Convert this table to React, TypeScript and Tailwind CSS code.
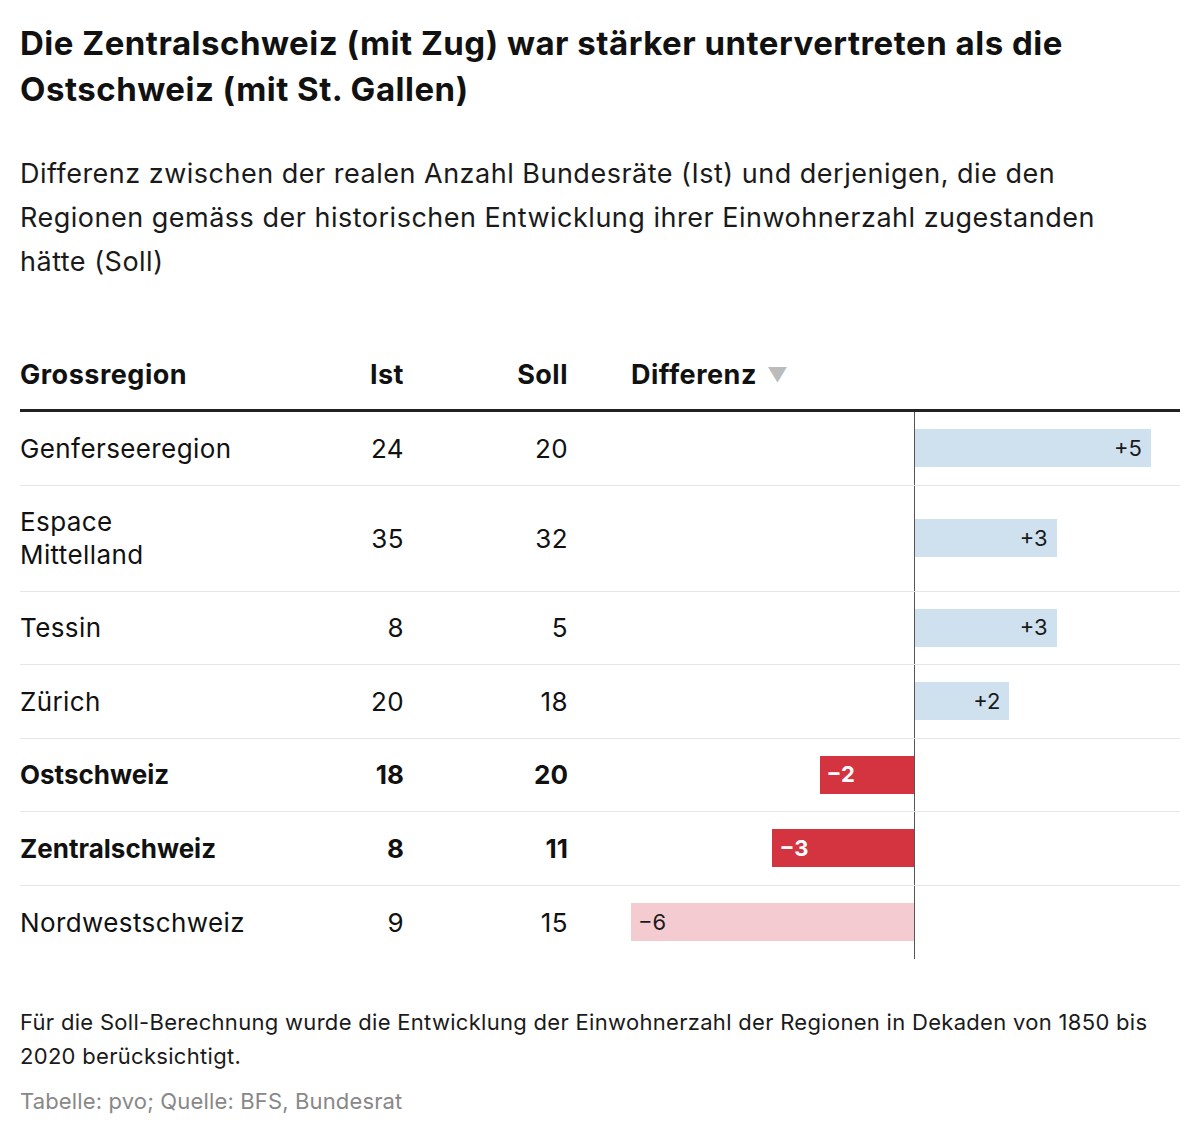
import React from "react";

type Row = {
  name: React.ReactNode;
  ist: number;
  soll: number;
  diff: number;
  bold?: boolean;
  tall?: boolean;
};

const rows: Row[] = [
  { name: "Genferseeregion", ist: 24, soll: 20, diff: 5 },
  {
    name: (
      <>
        Espace
        <br />
        Mittelland
      </>
    ),
    ist: 35,
    soll: 32,
    diff: 3,
    tall: true,
  },
  { name: "Tessin", ist: 8, soll: 5, diff: 3 },
  { name: "Zürich", ist: 20, soll: 18, diff: 2 },
  { name: "Ostschweiz", ist: 18, soll: 20, diff: -2, bold: true },
  { name: "Zentralschweiz", ist: 8, soll: 11, diff: -3, bold: true },
  { name: "Nordwestschweiz", ist: 9, soll: 15, diff: -6 },
];

const UNIT = 47.2;

function DiffBar({ diff, bold }: { diff: number; bold?: boolean }) {
  const label = diff > 0 ? `+${diff}` : `−${Math.abs(diff)}`;
  const w = Math.abs(diff) * UNIT;
  return (
    <div className="flex h-full">
      <div className="w-[283px] flex items-center justify-end">
        {diff < 0 && (
          <div
            className={`h-[38px] flex items-center pl-[7px] ${
              bold
                ? "bg-[#d4343f] text-white font-bold"
                : "bg-[#f3cbd0] text-[#1a1a1a]"
            }`}
            style={{ width: w }}
          >
            {label}
          </div>
        )}
      </div>
      <div className="flex-1 border-l border-[#555] flex items-center">
        {diff > 0 && (
          <div
            className="h-[38px] bg-[#cfe1ef] flex items-center justify-end pr-[9px] text-[#1a1a1a]"
            style={{ width: w }}
          >
            {label}
          </div>
        )}
      </div>
    </div>
  );
}

export default function App() {
  return (
    <div className="bg-white px-5 pt-[20px] pb-6 text-[#111] font-['Inter',sans-serif] w-[1200px]">
      <h1 className="text-[33px] leading-[46px] font-bold tracking-[0.5px]">
        Die Zentralschweiz (mit Zug) war stärker untervertreten als die
        <br />
        Ostschweiz (mit St. Gallen)
      </h1>
      <p className="mt-[40px] text-[27px] leading-[44px] tracking-[0.5px] text-[#1a1a1a]">
        Differenz zwischen der realen Anzahl Bundesräte (Ist) und derjenigen, die den
        <br />
        Regionen gemäss der historischen Entwicklung ihrer Einwohnerzahl zugestanden
        <br />
        hätte (Soll)
      </p>

      <div className="mt-[57px]">
        <div className="grid grid-cols-[300px_84px_164px_1fr] items-center h-[71px] border-b-[3px] border-[#222] text-[27px] font-bold tracking-[0.5px]">
          <div>Grossregion</div>
          <div className="text-right">Ist</div>
          <div className="text-right">Soll</div>
          <div className="pl-[63px] flex items-center gap-[10px]">
            Differenz
            <span className="text-[#bbb] text-[20px]">▼</span>
          </div>
        </div>
        {rows.map((r, i) => (
          <div
            key={i}
            className={`grid grid-cols-[300px_84px_164px_1fr] text-[26px] leading-[33px] ${
              r.tall ? "h-[106px]" : "h-[73.5px]"
            } ${i < rows.length - 1 ? "border-b border-[#e6e6e6]" : ""} ${
              r.bold ? "font-bold" : "tracking-[0.4px]"
            }`}
          >
            <div className="flex items-center">
              <span>{r.name}</span>
            </div>
            <div className="flex items-center justify-end">{r.ist}</div>
            <div className="flex items-center justify-end">{r.soll}</div>
            <div className="pl-[63px] text-[22px] tracking-normal">
              <DiffBar diff={r.diff} bold={r.bold} />
            </div>
          </div>
        ))}
      </div>

      <p className="mt-[46px] text-[22px] leading-[34px] tracking-[0.3px] text-[#1a1a1a]">
        Für die Soll-Berechnung wurde die Entwicklung der Einwohnerzahl der Regionen in Dekaden von 1850 bis
        <br />
        2020 berücksichtigt.
      </p>
      <p className="mt-[11px] text-[22px] leading-[34px] tracking-[0.15px] text-[#888]">
        Tabelle: pvo; Quelle: BFS, Bundesrat
      </p>
    </div>
  );
}
